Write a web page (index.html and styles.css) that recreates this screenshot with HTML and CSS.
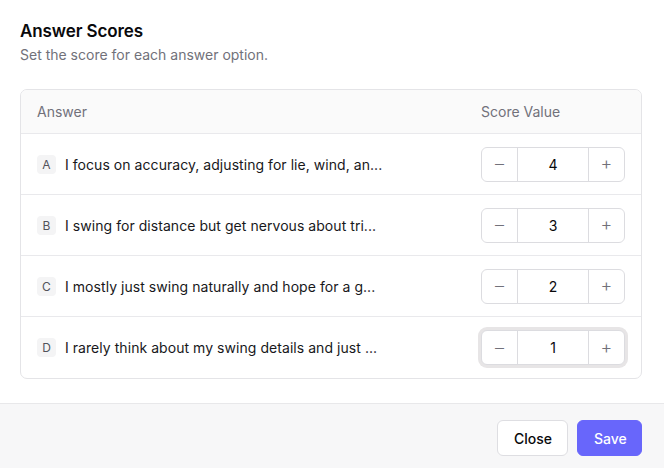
FILE: index.html
```html
<!DOCTYPE html>
<html>
<head>
<meta charset="utf-8">
<link rel="stylesheet" href="styles.css">
</head>
<body>
<div class="dialog">
  <div class="content">
    <h2 class="title">Answer Scores</h2>
    <p class="subtitle">Set the score for each answer option.</p>
    <div class="table">
      <div class="row head">
        <div class="cell-answer">Answer</div>
        <div class="cell-score">Score Value</div>
      </div>
      <div class="row">
        <div class="cell-answer"><span class="badge">A</span><span class="text">I focus on accuracy, adjusting for lie, wind, an...</span></div>
        <div class="cell-score"><div class="stepper"><button class="step">&#8211;</button><span class="val">4</span><button class="step">+</button></div></div>
      </div>
      <div class="row">
        <div class="cell-answer"><span class="badge">B</span><span class="text">I swing for distance but get nervous about tri...</span></div>
        <div class="cell-score"><div class="stepper"><button class="step">&#8211;</button><span class="val">3</span><button class="step">+</button></div></div>
      </div>
      <div class="row">
        <div class="cell-answer"><span class="badge">C</span><span class="text">I mostly just swing naturally and hope for a g...</span></div>
        <div class="cell-score"><div class="stepper"><button class="step">&#8211;</button><span class="val">2</span><button class="step">+</button></div></div>
      </div>
      <div class="row last">
        <div class="cell-answer"><span class="badge">D</span><span class="text">I rarely think about my swing details and just ...</span></div>
        <div class="cell-score"><div class="stepper focused"><button class="step">&#8211;</button><span class="val">1</span><button class="step">+</button></div></div>
      </div>
    </div>
  </div>
  <div class="footer">
    <button class="btn btn-close">Close</button>
    <button class="btn btn-save">Save</button>
  </div>
</div>
</body>
</html>
```
FILE: styles.css
```css
* { box-sizing: border-box; }
html, body { margin: 0; padding: 0; background: #ffffff; }
body { font-family: Inter, "Noto Sans", sans-serif; color: #18181b; width: 664px; height: 468px; overflow: hidden; }
.dialog { display: flex; flex-direction: column; height: 468px; }
.content { padding: 20px 22px 24px 20px; }
.title { margin: 0; font-size: 17px; font-weight: 600; line-height: 22px; color: #09090b; letter-spacing: -0.1px; }
.subtitle { margin: 3px 0 0; font-size: 14px; line-height: 20px; color: #71717a; }
.table { margin-top: 24px; border: 1px solid #e4e4e7; border-radius: 7px; overflow: hidden; }
.row { display: flex; align-items: center; height: 61px; border-bottom: 1px solid #e9e9ec; }
.row.last { border-bottom: none; height: 61px; }
.row.head { height: 44px; background: #fafafa; font-size: 14px; color: #71717a; }
.cell-answer { flex: 1; display: flex; align-items: center; padding-left: 16px; min-width: 0; }
.cell-score { width: 160px; padding-left: 0; display: flex; }
.badge { width: 19px; height: 19px; border-radius: 4px; background: #f4f4f5; color: #52525b; font-size: 12px; display: flex; align-items: center; justify-content: center; flex: none; }
.text { margin-left: 9px; font-size: 14px; letter-spacing: 0.05px; color: #18181b; white-space: nowrap; }
.stepper { display: flex; height: 35px; width: 144px; border: 1px solid #dcdce0; border-radius: 6px; background: #fff; }
.stepper.focused { box-shadow: 0 0 0 3px #e7e5e6; }
.step { width: 35px; border: none; background: transparent; color: #71717a; font-family: Inter, sans-serif; font-size: 18px; font-weight: 300; padding: 0; line-height: 1; }
.val { flex: 1; border-left: 1px solid #dcdce0; border-right: 1px solid #dcdce0; display: flex; align-items: center; justify-content: center; font-size: 14px; color: #09090b; }
.footer { flex: 1; background: #f7f7f8; border-top: 1px solid #e8e8ea; display: flex; justify-content: flex-end; align-items: flex-start; gap: 9px; padding: 16px 22px 0 0; }
.btn { height: 36px; border-radius: 6px; font-family: Inter, sans-serif; font-size: 14px; font-weight: 500; padding: 0 16px; }
.btn-close { width: 71px; background: #fff; border: 1px solid #dedee2; color: #09090b; }
.btn-save { width: 65px; background: #6866fb; border: 1px solid #6866fb; color: #fff; }
```
